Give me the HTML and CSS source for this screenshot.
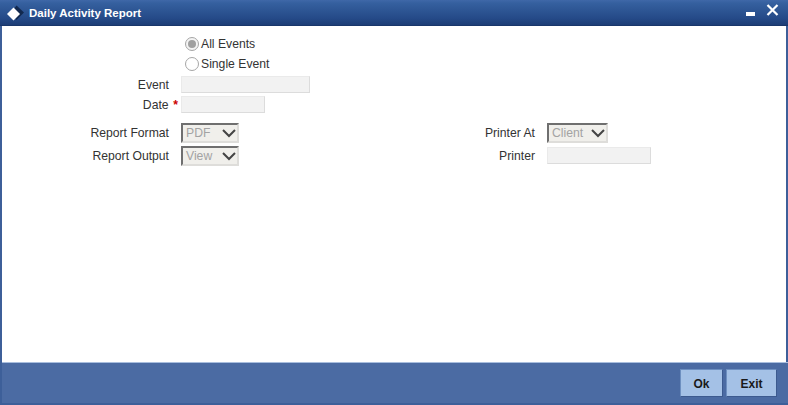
FILE: index.html
```html
<!DOCTYPE html>
<html lang="en">
<head>
<meta charset="utf-8">
<title>Daily Activity Report</title>
<link rel="stylesheet" href="styles.css">
</head>
<body>
<div class="window">
  <header class="titlebar">
    <svg class="logo" width="19" height="18" viewBox="0 0 19 18"><path d="M10.500 1.500 L18 8.500 L10.500 16 L5 9 Z" fill="#12294f"/><path d="M7.500 3.500 L14 10 L7.500 16.500 L1 10 Z" fill="#fff"/></svg>
    <h1 class="title">Daily Activity Report</h1>
    <div class="controls">
      <svg class="ctl-min" width="11" height="4" viewBox="0 0 11 4"><rect width="9" height="4" fill="#fff"/></svg>
      <svg class="ctl-close" width="13" height="12" viewBox="0 0 13 12"><path d="M1.500 1 L11.500 11 M11.500 1 L1.500 11" stroke="#fff" stroke-width="2.200"/></svg>
    </div>
  </header>
  <main class="body">
    <div class="radios">
      <label class="radio-row"><span class="radio checked"></span>All Events</label>
      <label class="radio-row"><span class="radio"></span>Single Event</label>
    </div>
    <div class="row row-event"><span class="label">Event</span><span class="input input-event"></span></div>
    <div class="row row-date"><span class="label">Date <b class="req">*</b></span><span class="input input-date"></span></div>
    <div class="columns">
      <div class="col">
        <div class="row"><span class="label">Report Format</span><span class="select sel-left">PDF<svg class="chev" width="14" height="9" viewBox="0 0 14 9"><path d="M1 1 L7 7 L13 1" fill="none" stroke="#444" stroke-width="2"/></svg></span></div>
        <div class="row"><span class="label">Report Output</span><span class="select sel-left">View<svg class="chev" width="14" height="9" viewBox="0 0 14 9"><path d="M1 1 L7 7 L13 1" fill="none" stroke="#444" stroke-width="2"/></svg></span></div>
      </div>
      <div class="col">
        <div class="row"><span class="label">Printer At</span><span class="select sel-right">Client<svg class="chev" width="14" height="9" viewBox="0 0 14 9"><path d="M1 1 L7 7 L13 1" fill="none" stroke="#444" stroke-width="2"/></svg></span></div>
        <div class="row"><span class="label">Printer</span><span class="input input-printer"></span></div>
      </div>
    </div>
  </main>
  <footer class="footer">
    <button class="btn btn-ok">Ok</button>
    <button class="btn btn-exit">Exit</button>
  </footer>
</div>
</body>
</html>
```
FILE: styles.css
```css
* { box-sizing: border-box; }
html, body { margin: 0; padding: 0; }
body { width: 788px; height: 405px; overflow: hidden; font-family: "Liberation Sans", Arial, sans-serif; font-size: 12.2px; color: #333; }
.window { width: 788px; height: 405px; display: flex; flex-direction: column; background: #3d5f99; }
.titlebar { height: 26px; display: flex; align-items: center; padding: 0 2px 0 6px; color: #fff; background: linear-gradient(#3f68a8 0, #35609f 12%, #254a88 70%, #1d3d76 96%, #16305f 100%); }
.logo { margin-right: 4px; flex: none; }
.title { margin: 0; font-size: 11.5px; font-weight: bold; flex: 1; }
.controls { display: flex; align-self: flex-start; gap: 9px; padding: 0 7px 0 0; }
.ctl-min { margin-top: 12px; }
.ctl-close { margin-top: 4px; }
.body { flex: 1; margin: 0 2px; background: #fff; padding-top: 8px; }
.radios { padding-left: 183px; }
.radio-row { display: flex; align-items: center; height: 20px; }
.radio { width: 14px; height: 14px; border: 1px solid #a6a6a6; border-radius: 50%; margin-right: 2px; display: flex; align-items: center; justify-content: center; background: #fff; }
.radio.checked { background: #f4f4f4; }
.radio.checked::after { content: ""; width: 8px; height: 8px; border-radius: 50%; background: #a0a0a0; }
.row { display: flex; align-items: center; }
.label { width: 167px; text-align: right; margin-right: 12px; }
.req { display: inline-block; width: 5px; margin: 0 -9px 0 1px; color: #c00; font-weight: bold; }
.input { display: block; height: 17px; background: #f2f2f2; border: 1px solid #eaeaea; border-bottom-color: #dcdcdc; border-right-color: #dcdcdc; }
.input-event { width: 129px; }
.input-date { width: 84px; }
.input-printer { width: 104px; margin-bottom: 1px; }
.row-event { margin-top: 1px; height: 19px; }
.row-date { height: 21px; }
.columns { display: flex; margin-top: 8px; }
.col { width: 366px; display: flex; flex-direction: column; gap: 3px; }
.col .row { height: 20px; }
.select { height: 20px; background: #f0efeb; border: 2px solid #dedddA; border-top-color: #6f6f6f; border-left-color: #6f6f6f; color: #a3a3a3; padding-left: 3px; display: flex; align-items: center; justify-content: space-between; }
.chev { margin-right: 1px; }
.sel-left { width: 58px; }
.sel-right { width: 61px; }
.footer { height: 43px; flex: none; background: #4b6ba3; margin-left: 2px; border-top: 1px solid #a9bede; border-bottom: 2px solid #3d5f99; display: flex; justify-content: flex-end; align-items: flex-start; padding: 6px 11px 0 0; gap: 3px; }
.btn { height: 28px; background: #a4c1e6; border: 1px solid #6d8fc0; border-right-color: #3c5a8f; border-bottom-color: #3c5a8f; font-family: inherit; font-size: 12px; font-weight: bold; color: #1a1a1a; padding: 1px 0 0; }
.btn-ok { width: 43px; }
.btn-exit { width: 51px; }
```
